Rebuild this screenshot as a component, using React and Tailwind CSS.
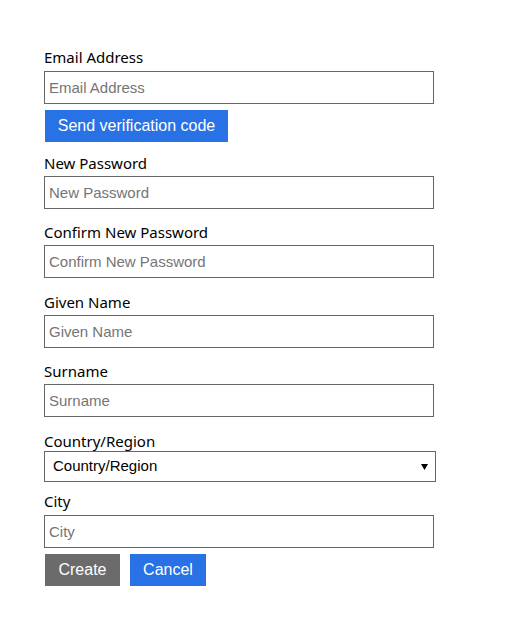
import React from "react";

const labelCls = "block text-[15px] leading-[20px] text-black [font-family:'Noto_Sans','Open_Sans',sans-serif]";
const inputCls = "block w-[390px] h-[33px] border border-[#666666] px-[4px] text-[15px] text-black placeholder:text-[#757575] [font-family:'Liberation_Sans',Arial,sans-serif] outline-none bg-white";
const btnFont = "[font-family:'Liberation_Sans',Arial,sans-serif] text-[16px] text-white";

function Field({ label, mt = "mt-[13px]" }) {
  return (
    <div className={mt}>
      <label className={labelCls}>{label}</label>
      <input className={`${inputCls} mt-[3px]`} placeholder={label} />
    </div>
  );
}

export default function App() {
  return (
    <div className="min-h-[636px] w-[515px] bg-white pl-[44px] pt-[47px]">
      <div>
        <label className={labelCls}>Email Address</label>
        <input className={`${inputCls} mt-[4px]`} placeholder="Email Address" />
      </div>
      <button className={`${btnFont} mt-[6px] ml-[1px] h-[32px] w-[183px] bg-[#2872e5]`}>
        Send verification code
      </button>
      <Field label="New Password" mt="mt-[11px]" />
      <Field label="Confirm New Password" />
      <Field label="Given Name" mt="mt-[14px]" />
      <Field label="Surname" />
      <div className="mt-[14px]">
        <label className={labelCls}>Country/Region</label>
        <div className="flex h-[31px] w-[392px] items-center justify-between border border-[#666666] bg-white pl-[8px] pr-[7px] [font-family:'Liberation_Sans',Arial,sans-serif] text-[15px] text-black">
          <span>Country/Region</span>
          <svg width="7" height="6" viewBox="0 0 7 6"><path d="M0 0h7L3.5 6z" fill="#000" /></svg>
        </div>
      </div>
      <div className="mt-[9px]">
        <label className={labelCls}>City</label>
        <input className={`${inputCls} mt-[4px]`} placeholder="City" />
      </div>
      <div className="mt-[6px] ml-[1px] flex gap-[10px]">
        <button className={`${btnFont} h-[32px] w-[75px] bg-[#6b6b6b]`}>Create</button>
        <button className={`${btnFont} h-[32px] w-[76px] bg-[#2872e5]`}>Cancel</button>
      </div>
    </div>
  );
}
